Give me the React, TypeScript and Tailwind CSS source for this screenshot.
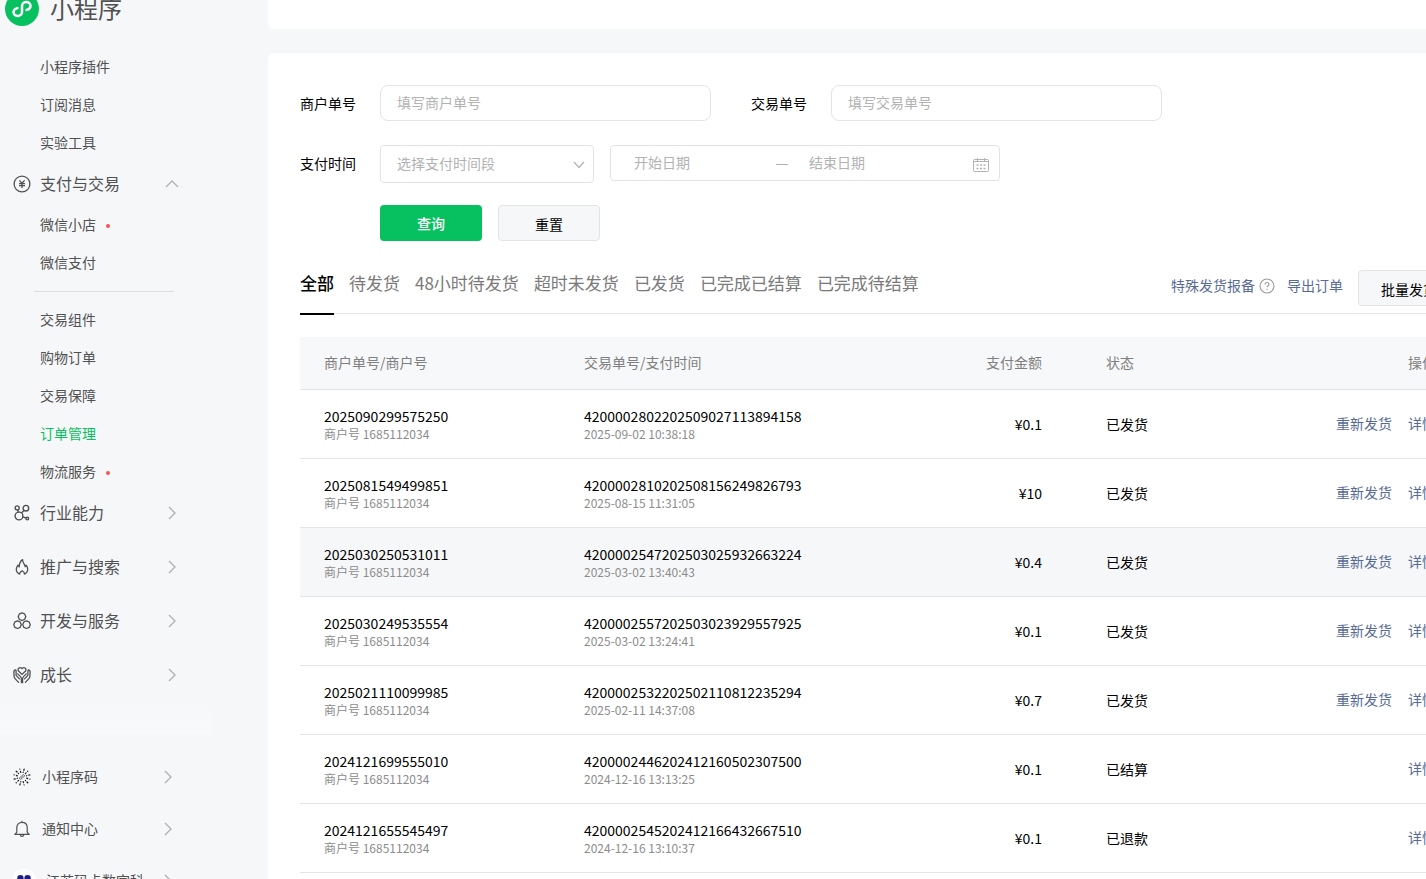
import React from 'react';

interface Order {
  id: string;
  merchant: string;
  transaction: string;
  time: string;
  amount: string;
  status: string;
  resend: boolean;
}

interface SubItem {
  label: string;
  dot?: boolean;
  active?: boolean;
}

const orders: Order[] = [
  { id: '2025090299575250', merchant: '1685112034', transaction: '4200002802202509027113894158', time: '2025-09-02 10:38:18', amount: '¥0.1', status: '已发货', resend: true },
  { id: '2025081549499851', merchant: '1685112034', transaction: '4200002810202508156249826793', time: '2025-08-15 11:31:05', amount: '¥10', status: '已发货', resend: true },
  { id: '2025030250531011', merchant: '1685112034', transaction: '4200002547202503025932663224', time: '2025-03-02 13:40:43', amount: '¥0.4', status: '已发货', resend: true },
  { id: '2025030249535554', merchant: '1685112034', transaction: '4200002557202503023929557925', time: '2025-03-02 13:24:41', amount: '¥0.1', status: '已发货', resend: true },
  { id: '2025021110099985', merchant: '1685112034', transaction: '4200002532202502110812235294', time: '2025-02-11 14:37:08', amount: '¥0.7', status: '已发货', resend: true },
  { id: '2024121699555010', merchant: '1685112034', transaction: '4200002446202412160502307500', time: '2024-12-16 13:13:25', amount: '¥0.1', status: '已结算', resend: false },
  { id: '2024121655545497', merchant: '1685112034', transaction: '4200002545202412166432667510', time: '2024-12-16 13:10:37', amount: '¥0.1', status: '已退款', resend: false },
];

const tabs = ['全部', '待发货', '48小时待发货', '超时未发货', '已发货', '已完成已结算', '已完成待结算'];

const featureItems: SubItem[] = [{ label: '小程序插件' }, { label: '订阅消息' }, { label: '实验工具' }];
const payItems: SubItem[] = [{ label: '微信小店', dot: true }, { label: '微信支付' }];
const tradeItems: SubItem[] = [
  { label: '交易组件' },
  { label: '购物订单' },
  { label: '交易保障' },
  { label: '订单管理', active: true },
  { label: '物流服务', dot: true },
];

const LogoIcon = () => (
  <svg className="size-[34px] shrink-0" viewBox="0 0 34 34" fill="none" aria-hidden="true">
    <circle cx="17" cy="17" r="17" fill="#07c160" />
    <path
      d="M21.6 17.9c2.3-.6 3.9-2 3.9-4 0-2.2-1.900-3.900-4.200-3.900S17 11.700 17 13.900v6.200c0 2.200-2 3.900-4.300 3.900s-4.200-1.700-4.200-3.900c0-2 1.600-3.400 3.900-4"
      stroke="#fff"
      strokeWidth="2.500"
      strokeLinecap="round"
    />
  </svg>
);

const YenIcon = () => (
  <svg className="size-[18px] shrink-0" viewBox="0 0 18 18" fill="none" stroke="currentColor" strokeWidth="1.300" aria-hidden="true">
    <circle cx="9" cy="9" r="7.900" />
    <path d="M6.400 5.400 9 8.300l2.600-2.900M9 8.300v4.600M6 8.600h6M6 10.700h6" />
  </svg>
);

const IndustryIcon = () => (
  <svg className="size-[18px] shrink-0" viewBox="0 0 18 18" fill="none" stroke="currentColor" strokeWidth="1.400" aria-hidden="true">
    <circle cx="4.200" cy="3.900" r="2" />
    <circle cx="12.900" cy="4.200" r="2.800" />
    <circle cx="6" cy="12" r="3.900" />
    <circle cx="14.300" cy="14.600" r="1.300" />
    <path d="M4.800 5.800 5.200 8M10.900 6.400 8.700 9M9.800 12.800l3.100 1.200" />
  </svg>
);

const FlameIcon = () => (
  <svg className="size-[18px] shrink-0" viewBox="0 0 18 18" fill="none" stroke="currentColor" strokeWidth="1.300" strokeLinejoin="round" aria-hidden="true">
    <path d="M6.600 16.100C4.500 15.300 3.300 13.500 3.300 11.300c0-1.900.9-3.100 1.700-4.200.3 1 .6 1.500 1.200 1.900C6.200 6 7.200 3.100 9.600 1.600c-.1 2.200.7 3.200 1.600 4.500.5.8.9 1.500 1 2.500.6-.4.8-.9.9-1.500.9 1 1.600 2.400 1.600 4.200 0 2.200-1.200 4-3.300 4.800.3-1.200-.6-2.300-2.100-3.300-1.700 1-3 2-2.700 3.300z" />
  </svg>
);

const ServiceIcon = () => (
  <svg className="size-[18px] shrink-0" viewBox="0 0 18 18" fill="none" stroke="currentColor" strokeWidth="1.300" strokeLinejoin="round" aria-hidden="true">
    <path d="m9 .9 2.500.9 1.300 2.700-1.100 2.800L9 8.500 6.300 7.300 5.200 4.500l1.300-2.700z" />
    <path d="m4.500 8.900 2.600 1 1.200 2.700-1.100 2.700-2.700 1.200-2.700-1.200L.7 12.600l1.200-2.700z" />
    <path d="m13.500 8.900 2.600 1 1.200 2.700-1.100 2.700-2.700 1.200-2.700-1.200-1.100-2.700 1.200-2.700z" />
  </svg>
);

const GrowthIcon = () => (
  <svg className="size-[18px] shrink-0" viewBox="0 0 18 18" fill="none" stroke="currentColor" strokeWidth="1.300" strokeLinecap="round" strokeLinejoin="round" aria-hidden="true">
    <path d="M9 8.400 5.700 5.200c-2-2.200.9-5 3.300-2.700 2.400-2.300 5.300.5 3.300 2.700z" />
    <path d="M2.700 3.800C1.300 4 .8 4.800.9 6.200l.2 4.300c.1 1 .5 1.700 1.200 2.400l3.300 3.500M3.100 4.600v4.800l3.300 3.500M4.700 7.900l2.600 2.500c.8.8 1.100 1.500 1.100 2.600v3.700" />
    <path d="M15.300 3.800c1.400.2 1.900 1 1.800 2.400l-.2 4.300c-.1 1-.5 1.700-1.200 2.400l-3.300 3.500M14.900 4.600v4.800l-3.300 3.500M13.300 7.900l-2.600 2.500c-.8.8-1.100 1.500-1.100 2.600v3.700" />
  </svg>
);

// rays of the mini program code, one every 30 degrees
const rays = Array.from({ length: 12 }, (_, i) => i * 30);

const CodeIcon = () => (
  <svg className="size-[18px] shrink-0" viewBox="0 0 18 18" fill="none" stroke="#222" strokeLinecap="round" aria-hidden="true">
    {rays.map((angle) => (
      <path key={angle} d={angle % 60 ? 'M9 .8v.1M9 3.200v1' : 'M9 .8v1.200M9 4v.2'} strokeWidth="1.300" transform={`rotate(${angle + 15} 9 9)`} />
    ))}
    <path d="M10.200 9.100c.9-.2 1.400-.7 1.400-1.300s-.6-1.100-1.300-1.100S9 7.200 9 7.800v2.400c0 .6-.6 1.100-1.300 1.100s-1.300-.5-1.300-1.100.5-1.100 1.400-1.300" strokeWidth=".9" stroke="#555" />
  </svg>
);

const BellIcon = () => (
  <svg className="size-[18px] shrink-0" viewBox="0 0 18 18" fill="none" stroke="currentColor" strokeWidth="1.200" strokeLinejoin="round" aria-hidden="true">
    <path d="M1.300 14.300h15.400M2.300 14.200l1.500-2V7.500c0-2.900 2-5.100 5.200-5.100s5.200 2.200 5.200 5.100v4.700l1.500 2M9 .8v1.600M7.200 14.600c.2 1.200.8 1.800 1.800 1.800s1.600-.6 1.800-1.800" />
  </svg>
);

const Avatar = () => (
  <svg className="size-6 shrink-0" viewBox="0 0 24 24" aria-hidden="true">
    <circle cx="12" cy="12" r="12" fill="#fff" />
    <circle cx="8.400" cy="9.300" r="3.200" fill="#1d1f87" />
    <circle cx="15.600" cy="9.300" r="3.200" fill="#1d1f87" />
    <path d="M5.500 10h13L12 18z" fill="#1d1f87" />
  </svg>
);

const Chevron: React.FC<{ up?: boolean }> = ({ up }) => (
  <svg className="ml-auto size-4 shrink-0 text-[#b2b2b2]" viewBox="0 0 16 16" fill="none" stroke="currentColor" strokeWidth="1.400" aria-hidden="true">
    <path d={up ? 'm2 11 6-6 6 6' : 'm5 2 6 6-6 6'} />
  </svg>
);

const SubList: React.FC<{ items: SubItem[] }> = ({ items }) => (
  <ul>
    {items.map((item) => (
      <li key={item.label}>
        <a
          href="#"
          className={`flex h-[38px] items-center gap-2.5 pb-0.5 pl-10 text-sm ${item.active ? 'text-[#07c160]' : 'text-[#505152]'}`}
        >
          {item.label}
          {item.dot && <span className="mt-1 size-1 rounded-full bg-[#fa5151]" />}
        </a>
      </li>
    ))}
  </ul>
);

const NavHeader: React.FC<{ icon: React.ReactNode; label: string; open?: boolean }> = ({ icon, label, open }) => (
  <button type="button" className="flex h-11 w-full shrink-0 items-center gap-[9px] pr-8 pl-[13px] text-base">
    {icon}
    <span className="pb-0.5">{label}</span>
    <Chevron up={open} />
  </button>
);

const Sidebar = () => (
  <aside className="flex w-[212px] shrink-0 flex-col text-[#505152]">
    <a href="#" className="-mt-2 flex h-[34px] shrink-0 items-center gap-[11px] pl-[5px] text-2xl">
      <LogoIcon />
      <span className="pb-0.5">小程序</span>
    </a>
    <nav className="mt-[22px]">
      <SubList items={featureItems} />
      <NavHeader icon={<YenIcon />} label="支付与交易" open />
      <SubList items={payItems} />
      <hr className="mt-[9px] mr-[38px] mb-[9px] ml-[34px] border-[#dcdee0]" />
      <SubList items={tradeItems} />
      <div className="flex flex-col gap-2.5">
        <NavHeader icon={<IndustryIcon />} label="行业能力" />
        <NavHeader icon={<FlameIcon />} label="推广与搜索" />
        <NavHeader icon={<ServiceIcon />} label="开发与服务" />
        <NavHeader icon={<GrowthIcon />} label="成长" />
      </div>
    </nav>
    <div className="h-[38px] shrink-0 bg-linear-to-b from-[#f6f7f9] to-[#f8f9fb]" />
    <div className="mt-4">
      <a href="#" className="flex h-[52px] items-center gap-[11px] pr-9 pl-[13px] text-sm">
        <CodeIcon />
        <span className="pb-0.5">小程序码</span>
        <Chevron />
      </a>
      <a href="#" className="flex h-[52px] items-center gap-[11px] pr-9 pl-[13px] text-sm">
        <BellIcon />
        <span className="pb-0.5">通知中心</span>
        <Chevron />
      </a>
      <a href="#" className="flex h-[52px] items-center gap-2.5 pr-9 pl-3 text-sm">
        <Avatar />
        <span className="pb-0.5">江苏码卡数字科</span>
        <Chevron />
      </a>
    </div>
  </aside>
);

const SearchForm = () => (
  <form className="flex flex-col gap-6" onSubmit={(e) => e.preventDefault()}>
    <div className="flex h-9 items-center">
      <label htmlFor="merchantNo" className="w-20">商户单号</label>
      <input
        id="merchantNo"
        placeholder="填写商户单号"
        className="h-9 w-[331px] rounded-lg border border-[#e4e4e4] px-4 pb-0.5 placeholder:text-[#b2b2b2]"
      />
      <label htmlFor="transactionNo" className="ml-10 w-20">交易单号</label>
      <input
        id="transactionNo"
        placeholder="填写交易单号"
        className="h-9 w-[331px] rounded-lg border border-[#e4e4e4] px-4 pb-0.5 placeholder:text-[#b2b2b2]"
      />
    </div>
    <div className="flex h-9 items-start">
      <label htmlFor="payRange" className="w-20 leading-9">支付时间</label>
      <div className="relative mr-4">
        <select
          id="payRange"
          className="h-[38px] w-[214px] appearance-none rounded border border-[#e1e3e5] bg-white px-4 pb-0.5 text-[#b2b2b2]"
        >
          <option>选择支付时间段</option>
        </select>
        <svg className="pointer-events-none absolute top-3 right-[7px] size-4 text-[#b2b2b2]" viewBox="0 0 16 16" fill="none" stroke="currentColor" strokeWidth="1.200" aria-hidden="true">
          <path d="m3 5 5 5.500L13 5" />
        </svg>
      </div>
      <div className="flex h-9 w-[390px] items-center rounded border border-[#e1e3e5] pr-2.5 pl-[23px]">
        <input aria-label="开始日期" placeholder="开始日期" className="w-[142px] pb-0.5 placeholder:text-[#b2b2b2]" />
        <span className="mt-0.5 mr-[21px] h-px w-3 bg-[#b2b2b2]" />
        <input aria-label="结束日期" placeholder="结束日期" className="min-w-0 flex-1 pb-0.5 placeholder:text-[#b2b2b2]" />
        <svg className="mt-1 size-4 shrink-0" viewBox="0 0 16 16" fill="none" stroke="#b2b2b2" aria-hidden="true">
          <rect x=".5" y="2.500" width="15" height="12" rx="1" />
          <path d="M.5 4.500h15M4.500 1v3M11.500 1v3" />
          <path d="M3.500 8h2M7 8h2M10.500 8h2M3.500 11.500h2M7 11.500h2M10.500 11.500h2" strokeWidth="1.500" />
        </svg>
      </div>
    </div>
    <div className="flex gap-4 pl-20">
      <button type="submit" className="h-9 w-[102px] rounded bg-[#07c160] font-medium text-white">查询</button>
      <button type="reset" className="h-9 w-[102px] rounded border border-[#e1e3e5] bg-[#f6f7f9] pt-0.5 text-black">重置</button>
    </div>
  </form>
);

const Toolbar = () => (
  <div className="mt-3 flex h-[61px] items-start border-b border-[#e4e4e4]">
    <div role="tablist" className="flex gap-[15px] text-[17px]">
      {tabs.map((tab, index) => (
        <button
          key={tab}
          type="button"
          role="tab"
          aria-selected={index === 0}
          className={`h-[62px] border-b-2 ${index === 0 ? 'border-black font-medium text-black' : 'border-transparent text-[#7a7a7a]'}`}
        >
          {tab}
        </button>
      ))}
    </div>
    <div className="ml-auto flex items-center pt-[17px] text-[#576b95]">
      <a href="#" className="pb-1.5">特殊发货报备</a>
      <svg className="mr-3 mb-1 ml-1 size-4" viewBox="0 0 16 16" fill="none" stroke="#9a9a9a" strokeWidth="1.100" aria-hidden="true">
        <circle cx="8" cy="8" r="7" />
        <path d="M6 6.500c0-1.200.8-2 2-2s2 .8 2 1.800c0 1.400-2 1.500-2 3M8 10.700v1.200" />
      </svg>
      <a href="#" className="pb-1.5">导出订单</a>
      <button type="button" className="ml-[15px] h-9 w-[102px] rounded border border-[#e1e3e5] bg-[#f6f7f9] pt-0.5 text-black">
        批量发货
      </button>
    </div>
  </div>
);

const OrderTable = () => (
  <table className="mt-[23px] w-full table-fixed border-separate border-spacing-0">
    <colgroup>
      <col className="w-[260px]" />
      <col className="w-[325px]" />
      <col className="w-[197px]" />
      <col className="w-[130px]" />
      <col />
    </colgroup>
    <thead>
      <tr className="h-[53px] bg-[#f7f8fa] text-left text-[#7f7f7f] *:border-b *:border-[#e4e4e4] *:pb-0.5 *:font-normal">
        <th className="pl-6">商户单号/商户号</th>
        <th className="pl-6">交易单号/支付时间</th>
        <th className="pr-10 text-right">支付金额</th>
        <th className="pl-6">状态</th>
        <th className="pr-6 text-right">操作</th>
      </tr>
    </thead>
    <tbody>
      {orders.map((order, index) => (
        <tr key={order.id} className={`h-[69px] *:border-b *:border-[#e4e4e4] ${index === 2 ? 'bg-[#f6f7f9]' : ''}`}>
          <td className="pt-0.5 pl-6">
            <p className="leading-[18px]">{order.id}</p>
            <p className="text-xs leading-[18px] text-[#8c8c8c]">商户号 {order.merchant}</p>
          </td>
          <td className="pt-0.5 pl-6">
            <p className="leading-[18px]">{order.transaction}</p>
            <p className="text-xs leading-[18px] text-[#8c8c8c]">{order.time}</p>
          </td>
          <td className="pr-10 text-right">{order.amount}</td>
          <td className="pl-6">{order.status}</td>
          <td className="pr-6 pb-0.5 text-right text-[#576b95]">
            {order.resend && <a href="#" className="mr-4">重新发货</a>}
            <a href="#">详情</a>
          </td>
        </tr>
      ))}
    </tbody>
  </table>
);

const App: React.FC = () => {
  return (
    <div className="flex h-screen overflow-hidden bg-[#f6f7f9] font-['Noto_Sans_CJK_SC',sans-serif] text-sm text-black">
      <Sidebar />
      <main className="ml-14 flex min-w-[1224px] flex-1 flex-col">
        <div className="h-[29px] shrink-0 rounded-b-md bg-white" />
        <section className="mt-6 flex-1 rounded-t-md bg-white px-8 pt-8">
          <SearchForm />
          <Toolbar />
          <OrderTable />
        </section>
      </main>
    </div>
  );
};

export default App;
